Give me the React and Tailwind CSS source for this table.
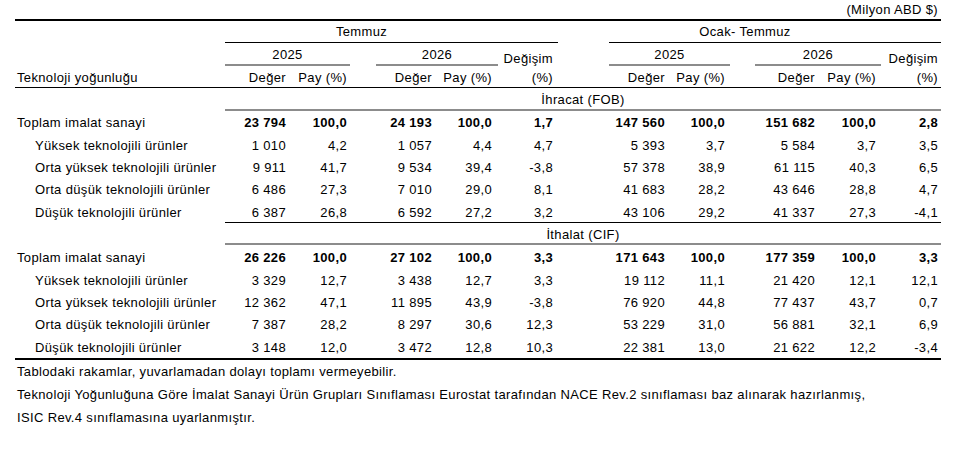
import React from "react";

const GRID =
  "grid grid-cols-[210px_65px_60px_26px_60px_62px_60px_51px_60px_61px_25px_64px_62px_60px]";

const exportRows = [
  ["Toplam imalat sanayi", ["23 794", "100,0", "24 193", "100,0", "1,7", "147 560", "100,0", "151 682", "100,0", "2,8"], true],
  ["Yüksek teknolojili ürünler", ["1 010", "4,2", "1 057", "4,4", "4,7", "5 393", "3,7", "5 584", "3,7", "3,5"]],
  ["Orta yüksek teknolojili ürünler", ["9 911", "41,7", "9 534", "39,4", "-3,8", "57 378", "38,9", "61 115", "40,3", "6,5"]],
  ["Orta düşük teknolojili ürünler", ["6 486", "27,3", "7 010", "29,0", "8,1", "41 683", "28,2", "43 646", "28,8", "4,7"]],
  ["Düşük teknolojili ürünler", ["6 387", "26,8", "6 592", "27,2", "3,2", "43 106", "29,2", "41 337", "27,3", "-4,1"]],
];

const importRows = [
  ["Toplam imalat sanayi", ["26 226", "100,0", "27 102", "100,0", "3,3", "171 643", "100,0", "177 359", "100,0", "3,3"], true],
  ["Yüksek teknolojili ürünler", ["3 329", "12,7", "3 438", "12,7", "3,3", "19 112", "11,1", "21 420", "12,1", "12,1"]],
  ["Orta yüksek teknolojili ürünler", ["12 362", "47,1", "11 895", "43,9", "-3,8", "76 920", "44,8", "77 437", "43,7", "0,7"]],
  ["Orta düşük teknolojili ürünler", ["7 387", "28,2", "8 297", "30,6", "12,3", "53 229", "31,0", "56 881", "32,1", "6,9"]],
  ["Düşük teknolojili ürünler", ["3 148", "12,0", "3 472", "12,8", "10,3", "22 381", "13,0", "21 622", "12,2", "-3,4"]],
];

function DataRow({ label, vals, bold }) {
  const v = (i, cls) => (
    <div className={`flex items-center justify-end ${cls} ${bold ? "font-bold" : ""}`}>{vals[i]}</div>
  );
  return (
    <div className={`${GRID} h-[22.4px] pt-[2px]`}>
      <div className={`flex items-center ${bold ? "pl-[2px]" : "pl-[20px]"}`}>{label}</div>
      {v(0, "pr-[4px]")}
      {v(1, "pr-[3px]")}
      <div />
      {v(2, "pr-[4px]")}
      {v(3, "pr-[6px]")}
      {v(4, "pr-[5px]")}
      <div />
      {v(5, "pr-[4px]")}
      {v(6, "pr-[5px]")}
      <div />
      {v(7, "pr-[4px]")}
      {v(8, "pr-[5px]")}
      {v(9, "pr-[3px]")}
    </div>
  );
}

export default function App() {
  return (
    <div className="w-[956px] h-[451px] bg-white text-black font-['Liberation_Sans',Arial,sans-serif] text-[13px] tracking-[0.35px] leading-none">
      <div className="ml-[15px] w-[926px]">
        <div className="h-[19px] flex items-center justify-end pr-[3px]">(Milyon ABD $)</div>
        <div className="border-t-2 border-black">
          {/* Row: Temmuz / Ocak-Temmuz */}
          <div className={`${GRID} h-[22px]`}>
            <div />
            <div className="col-[2/8] border-b border-black flex items-center">
              <div className="w-[273px] text-center">Temmuz</div>
            </div>
            <div className="col-[9/15] border-b border-black flex items-center">
              <div className="w-[272px] text-center">Ocak- Temmuz</div>
            </div>
          </div>
          {/* Row: years */}
          <div className={`${GRID} h-[22.5px]`}>
            <div />
            <div className="col-[2/4] border-b-2 border-[#8c8c8c] flex items-center justify-center pt-[2px]">2025</div>
            <div className="col-[5/7] border-b-2 border-[#8c8c8c] flex items-center justify-center pt-[2px]">2026</div>
            <div className="col-[7/8] flex items-center justify-end pr-[5px] pt-[8px]">Değişim</div>
            <div className="col-[9/11] border-b-2 border-[#8c8c8c] flex items-center justify-center pt-[2px]">2025</div>
            <div className="col-[12/14] border-b-2 border-[#8c8c8c] flex items-center justify-center pt-[2px]">2026</div>
            <div className="col-[14/15] flex items-center justify-end pr-[3px] pt-[8px]">Değişim</div>
          </div>
          {/* Row: Değer / Pay */}
          <div className={`${GRID} h-[22px] border-b border-black pt-[3px]`}>
            <div className="flex items-center pl-[2px]">Teknoloji yoğunluğu</div>
            <div className="flex items-center justify-end pr-[4px]">Değer</div>
            <div className="flex items-center justify-end pr-[3px]">Pay (%)</div>
            <div />
            <div className="flex items-center justify-end pr-[4px]">Değer</div>
            <div className="flex items-center justify-end pr-[6px]">Pay (%)</div>
            <div className="flex items-center justify-end pr-[5px]">(%)</div>
            <div />
            <div className="flex items-center justify-end pr-[4px]">Değer</div>
            <div className="flex items-center justify-end pr-[5px]">Pay (%)</div>
            <div />
            <div className="flex items-center justify-end pr-[4px]">Değer</div>
            <div className="flex items-center justify-end pr-[5px]">Pay (%)</div>
            <div className="flex items-center justify-end pr-[3px]">(%)</div>
          </div>
          {/* Section: İhracat */}
          <div className="ml-[210px] h-[23px] border-b-2 border-[#8c8c8c] flex items-center justify-center pt-[2px]">
            İhracat (FOB)
          </div>
          {exportRows.map(([l, v, b]) => (
            <DataRow key={l} label={l} vals={v} bold={b} />
          ))}
          <div className="ml-[210px] h-px bg-black" />
          {/* Section: İthalat */}
          <div className="ml-[210px] h-[22px] border-b-2 border-[#8c8c8c] flex items-center justify-center pt-[3px]">
            İthalat (CIF)
          </div>
          {importRows.map(([l, v, b]) => (
            <DataRow key={l} label={l} vals={v} bold={b} />
          ))}
        </div>
        <div className="border-t-2 border-black mt-[1px]" />
        <div className="pl-[2px]">
          <div className="h-[23px] flex items-center">Tablodaki rakamlar, yuvarlamadan dolayı toplamı vermeyebilir.</div>
          <div className="h-[23px] flex items-center">
            Teknoloji Yoğunluğuna Göre İmalat Sanayi Ürün Grupları Sınıflaması Eurostat tarafından NACE Rev.2 sınıflaması baz alınarak hazırlanmış,
          </div>
          <div className="h-[23px] flex items-center">ISIC Rev.4 sınıflamasına uyarlanmıştır.</div>
        </div>
      </div>
    </div>
  );
}
